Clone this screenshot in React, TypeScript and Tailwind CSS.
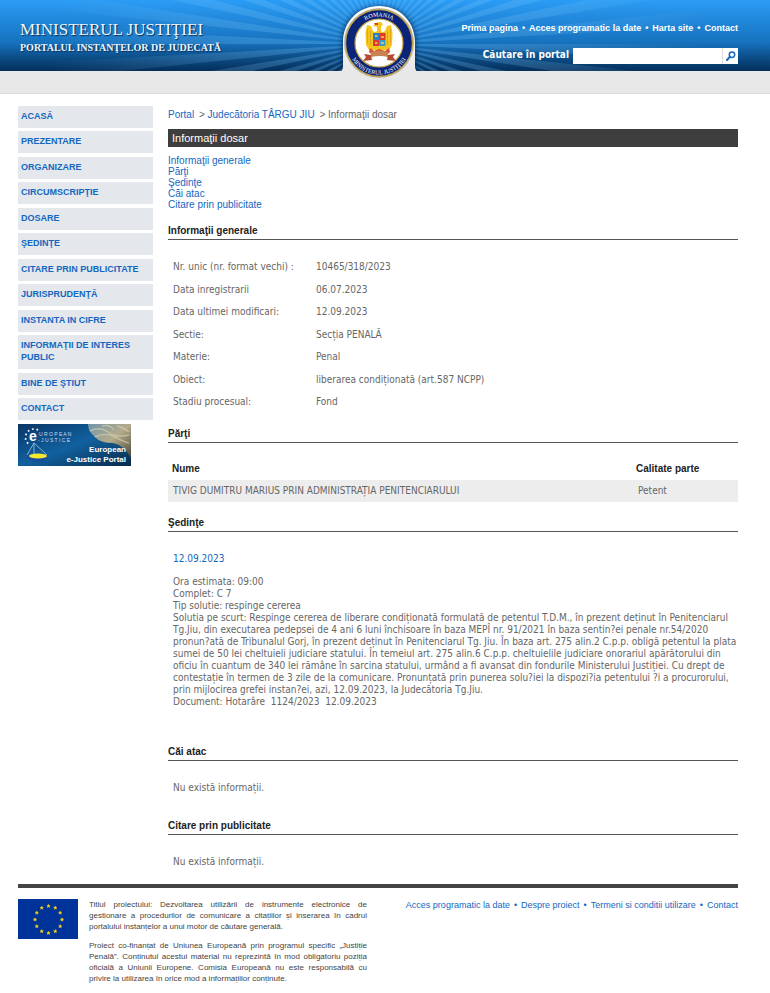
import React from 'react';

const menu = [
  'ACASĂ', 'PREZENTARE', 'ORGANIZARE', 'CIRCUMSCRIPŢIE', 'DOSARE', 'ŞEDINŢE',
  'CITARE PRIN PUBLICITATE', 'JURISPRUDENŢĂ', 'INSTANTA IN CIFRE',
  'INFORMAŢII DE INTERES PUBLIC', 'BINE DE ŞTIUT', 'CONTACT',
];

const details = [
  ['Nr. unic (nr. format vechi) :', '10465/318/2023'],
  ['Data inregistrarii', '06.07.2023'],
  ['Data ultimei modificari:', '12.09.2023'],
  ['Sectie:', 'Secția PENALĂ'],
  ['Materie:', 'Penal'],
  ['Obiect:', 'liberarea condiționată (art.587 NCPP)'],
  ['Stadiu procesual:', 'Fond'],
];

const anchors = [
  ['generale', 'Informaţii generale'],
  ['parti', 'Părţi'],
  ['sedinte', 'Şedinţe'],
  ['cai', 'Căi atac'],
  ['citare', 'Citare prin publicitate'],
];

function LinkRow({ items, className }: { items: string[]; className: string }) {
  return (
    <ul className={'flex justify-end whitespace-nowrap ' + className}>
      {items.map((t, i) => (
        <li key={t}>
          {i > 0 && <span className="mx-1">•</span>}
          <a href="#">{t}</a>
        </li>
      ))}
    </ul>
  );
}

function Emblem() {
  return (
    <svg viewBox="0 0 98 96" className="h-24 w-[98px]" role="img" aria-label="Ministerul Justiției">
      <defs>
        <filter id="glow" x="-20%" y="-20%" width="140%" height="140%">
          <feGaussianBlur stdDeviation="2.500" />
        </filter>
        <linearGradient id="tab" x1="0" x2="0" y1="0" y2="1">
          <stop offset="0" stopColor="#fff" />
          <stop offset=".9" stopColor="#e8e8e8" />
        </linearGradient>
        <clipPath id="band"><rect width="98" height="71" /></clipPath>
        <path id="arcTop" d="M22.500 43 A26.500 26.500 0 0 1 75.500 43" />
        <path id="arcBottom" d="M17.500 43 A31.500 31.500 0 0 0 80.500 43" />
      </defs>
      <g clipPath="url(#band)">
        <path d="M12 72 V42 C12 20 28 6 49 6 C70 6 86 20 86 42 V72Z" fill="#04234a" opacity=".75" filter="url(#glow)" />
      </g>
      <path d="M10 72 C12 71 13 69 13 66 V42 C13 21 29 6 49 6 C69 6 85 21 85 42 V66 C85 69 86 71 88 72 V80 H10Z" fill="url(#tab)" />
      <circle cx="49" cy="43" r="35" fill="#b9b9b9" />
      <circle cx="49" cy="43" r="33.500" fill="#0b2478" stroke="#c4a748" strokeWidth="1.300" />
      <circle cx="49" cy="43" r="24" fill="#fff" stroke="#c4a748" strokeWidth="1.200" />
      <text fontFamily="Liberation Serif, serif" fontSize="6" fill="#fff" textAnchor="middle">
        <textPath href="#arcTop" startOffset="50%">ROMANIA</textPath>
      </text>
      <text fontFamily="Liberation Serif, serif" fontSize="6" fill="#fff" textAnchor="middle">
        <textPath href="#arcBottom" startOffset="50%">MINISTERUL JUSTIŢIEI</textPath>
      </text>
      <path d="M46 23 q3-2 6 0 l1 2 -2 1 v5 q2 2 4 0 l2-5 4-1 1.500 8 -.5 12 -3 5 h-6 l-4 5 -4-5 h-6 l-3-5 -.5-12 1.500-8 4 1 2 5 q2 2 4 0 v-4 l-4-1 2-2Z" fill="#f4c41f" />
      <path d="M37.500 29v14M40.500 31v14M57.500 31v14M60.500 29v14" stroke="#d8a21a" strokeWidth=".8" />
      <path d="M44 23h4v2h-3Z" fill="#d8452c" />
      <rect x="43" y="33" width="6" height="7" fill="#2c7fc2" />
      <rect x="49" y="33" width="6.500" height="7" fill="#dc3a2c" />
      <rect x="43" y="40" width="6" height="6" fill="#dc3a2c" />
      <rect x="49" y="40" width="6.500" height="6" fill="#35a0cf" />
      <path d="M45 36h2.500M51 37h3M45 43h2.500M51 43h3" stroke="#f4d24a" strokeWidth="1.500" />
      <path d="M40 48l4 3 5-2 6 2 4-3 1 4-4 4H43l-4-4Z" fill="#d8502f" />
      <path d="M41 52q8-3 17 0v5q-8-2-17 0Z" fill="#c88352" />
      <path d="M41 55l-7-1 2 3-3 4 9-1ZM58 55l7-1-2 3 3 4-9-1Z" fill="#b44a30" />
    </svg>
  );
}

const rays = Array.from({ length: 60 }, (_, i) => {
  const a = (i * Math.PI) / 30;
  const x1 = 379 + 420 * Math.cos(a);
  const y1 = 44 + 420 * Math.sin(a);
  const x2 = 379 + 420 * Math.cos(a + 0.05);
  const y2 = 44 + 420 * Math.sin(a + 0.05);
  return `M379 44L${x1.toFixed(1)} ${y1.toFixed(1)} ${x2.toFixed(1)} ${y2.toFixed(1)}Z`;
}).join('');

function Rays() {
  return (
    <svg className="absolute inset-0 h-full w-full" viewBox="0 0 770 71" preserveAspectRatio="xMidYMid slice" aria-hidden="true">
      <defs>
        <radialGradient id="ray" gradientUnits="userSpaceOnUse" cx="379" cy="44" r="330">
          <stop offset="0" stopColor="#6cc4ff" stopOpacity=".3" />
          <stop offset=".5" stopColor="#8fd0ff" stopOpacity=".18" />
          <stop offset="1" stopColor="#8fd0ff" stopOpacity="0" />
        </radialGradient>
      </defs>
      <path d={rays} fill="url(#ray)" />
    </svg>
  );
}

function JusticeBanner() {
  return (
    <svg viewBox="0 0 113 42" className="h-[42px] w-[113px]" role="img" aria-label="European e-Justice Portal">
      <defs>
        <linearGradient id="ban" x1="0" x2="1" y1="0" y2="1">
          <stop offset="0" stopColor="#0a3566" />
          <stop offset=".5" stopColor="#11619f" />
          <stop offset="1" stopColor="#082a4b" />
        </linearGradient>
        <linearGradient id="stone" x1="0" x2="1" y1="0" y2="1">
          <stop offset="0" stopColor="#6e97ad" />
          <stop offset=".5" stopColor="#b5aa8a" />
          <stop offset="1" stopColor="#45483c" />
        </linearGradient>
      </defs>
      <rect width="113" height="42" fill="url(#ban)" />
      <path d="M70 0h43v34q-7-13-18-15-13 0-18-6-7-5-7-13Z" fill="url(#stone)" />
      <path d="M72 7q10-5 18 1t21 3M77 13q11-5 20 0t14 6M84 2q8-2 12 4M99 2q6 1 12 6" fill="none" stroke="#dbd3b4" strokeWidth="1.500" opacity=".6" />
      <path d="M20 6A8.500 8.500 0 1 0 12 21" fill="none" stroke="#fff" strokeWidth="1.700" strokeDasharray="1.700 2.800" />
      <text x="11" y="17" fontFamily="Liberation Sans, sans-serif" fontSize="14" fontWeight="700" fill="#fff">e</text>
      <g fontFamily="Liberation Sans, sans-serif" fontSize="5" fill="#c8def0">
        <text x="21" y="12">U R O P E A N</text>
        <text x="20" y="18">- J U S T I C E</text>
      </g>
      <path d="M16 19 L9 31M16 19v12M16 19l13 12" fill="none" stroke="#9cc8e6" strokeWidth=".8" />
      <path d="M8 31h22q-2 7-11 7t-11-7Z" fill="#174b9c" />
      <ellipse cx="20" cy="32" rx="9" ry="2.500" fill="#f8e92e" />
      <g fontFamily="Liberation Sans, sans-serif" fontSize="8" fontWeight="700" fill="#fff" textAnchor="end">
        <text x="108" y="28">European</text>
        <text x="108" y="38">e-Justice Portal</text>
      </g>
    </svg>
  );
}

function EuFlag() {
  const stars = Array.from({ length: 12 }, (_, i) => {
    const a = (i * Math.PI) / 6;
    return [30.5 + 13.5 * Math.sin(a), 20.5 - 13.5 * Math.cos(a)];
  });
  return (
    <svg viewBox="0 0 60 40" className="h-10 w-[60px] shrink-0" role="img" aria-label="Uniunea Europeană">
      <rect width="60" height="40" fill="#039" />
      {stars.map(([x, y]) => (
        <path key={`${x}-${y}`} transform={`translate(${x} ${y})`} d="M0-1.700 .5-.5 1.700-.5 .8.3 1.100 1.500 0 .8-1.100 1.500-.8.3-1.700-.5-.5-.5Z" fill="#fd1" stroke="#fd1" strokeWidth=".4" />
      ))}
    </svg>
  );
}

function Heading({ id, children }: { id: string; children: React.ReactNode }) {
  return (
    <h2 id={id} className="border-b border-[#555] pb-[2px] text-[10px] leading-[12px] font-bold text-[#222]">
      {children}
    </h2>
  );
}

export default function App() {
  return (
    <div className="bg-white font-['Liberation_Sans',sans-serif] text-[10px] text-[#666]">
      <header className="relative border-b border-[#d8d8d8] bg-[#e8e8e8] pb-[22px]">
        <div className="relative h-[71px] bg-linear-to-b from-[#2b9cf5] via-[#1672be] via-60% to-[#052f5a]">
          <Rays />
          <div className="relative mr-8 ml-5 flex justify-between">
            <div className="pt-5 font-['Liberation_Serif',serif] whitespace-nowrap text-[#eef5fc] [text-shadow:1px_1px_1px_#07305a]">
              <h1 className="text-[17px] leading-[19px]">MINISTERUL JUSTIŢIEI</h1>
              <p className="pt-[2px] text-[10px] leading-[14px] font-bold">PORTALUL INSTANŢELOR DE JUDECATĂ</p>
            </div>
            <div className="pt-[22px] text-white">
              <LinkRow items={['Prima pagina', 'Acces programatic la date', 'Harta site', 'Contact']} className="text-[9px] leading-[12px] font-bold" />
              <form className="mt-[14px] flex items-center justify-end" onSubmit={(e) => e.preventDefault()}>
                <label htmlFor="q" className="mr-1 pb-[2px] font-['DejaVu_Sans_Condensed','DejaVu_Sans',sans-serif] text-[10px] leading-[12px] font-bold">Căutare în portal</label>
                <input id="q" type="text" className="h-4 w-[149px] bg-white px-1 text-[10px] text-black outline-none" />
                <button type="submit" aria-label="Caută" className="flex h-4 w-4 items-center justify-center border-l border-[#ddd] bg-white">
                  <svg viewBox="0 0 10 10" className="h-[10px] w-[10px]" fill="none" stroke="#1467b8">
                    <circle cx="6" cy="3.700" r="2.700" strokeWidth="1.500" />
                    <path d="M4 5.700 1 9" strokeWidth="2" strokeLinecap="round" />
                  </svg>
                </button>
              </form>
            </div>
          </div>
        </div>
        <div className="pointer-events-none absolute top-0 right-8 left-5 flex justify-center">
          <Emblem />
        </div>
      </header>

      <div className="mr-8 ml-[18px] flex gap-[15px] pt-3">
        <nav className="w-[135px] shrink-0">
          <ul>
            {menu.map((m) => (
              <li key={m} className="odd:mb-[3px] even:mb-1">
                <a href="#" className="block bg-[#e4e8ec] pt-1 pr-3 pb-[6px] pl-[3px] text-[9px] leading-[12px] font-bold text-[#1467c0]">{m}</a>
              </li>
            ))}
          </ul>
          <a href="#" className="block"><JusticeBanner /></a>
        </nav>

        <main className="min-w-0 grow">
          <p className="pt-[3px] text-[10px] leading-[12px]">
            <a href="#" className="text-[#1467c0]">Portal</a>
            <span className="ml-[2px]"> &gt; </span>
            <a href="#" className="text-[#1467c0]">Judecătoria TÂRGU JIU</a>
            <span className="ml-[2px]"> &gt; </span>Informaţii dosar
          </p>
          <h1 className="mt-2 bg-[#3e3e3e] pl-1 text-[11px] leading-[18px] text-white">Informaţii dosar</h1>
          <ul className="mt-2 text-[10px] leading-[11px] text-[#1467c0]">
            {anchors.map(([id, t]) => (
              <li key={id}><a href={'#' + id}>{t}</a></li>
            ))}
          </ul>

          <section className="pt-[15px]">
            <Heading id="generale">Informaţii generale</Heading>
            <table className="mt-4 font-['DejaVu_Sans_Condensed','DejaVu_Sans',sans-serif] text-[10px] leading-[12px]">
              <tbody>
                {details.map(([k, v]) => (
                  <tr key={k} className="odd:h-[22px] even:h-[23px]">
                    <th scope="row" className="w-[148px] pl-[5px] text-left font-normal">{k}</th>
                    <td>{v}</td>
                  </tr>
                ))}
              </tbody>
            </table>
          </section>

          <section className="pt-[15px]">
            <Heading id="parti">Părţi</Heading>
            <table className="mt-[15px] w-full text-left text-[10px] leading-[12px]">
              <thead>
                <tr className="h-[22px] text-[#222]">
                  <th className="pl-1">Nume</th>
                  <th className="w-[102px]">Calitate parte</th>
                </tr>
              </thead>
              <tbody className="font-['DejaVu_Sans_Condensed','DejaVu_Sans',sans-serif]">
                <tr className="h-[22px] bg-[#ededed]">
                  <td className="pl-[5px]">TIVIG DUMITRU MARIUS PRIN ADMINISTRAȚIA PENITENCIARULUI</td>
                  <td className="pl-[2px]">Petent</td>
                </tr>
              </tbody>
            </table>
          </section>

          <section className="pt-[15px]">
            <Heading id="sedinte">Şedinţe</Heading>
            <div className="mt-[21px] pl-[5px] font-['DejaVu_Sans_Condensed','DejaVu_Sans',sans-serif] text-[10px] leading-[12px]">
              <p><a href="#" className="text-[#1467c0]">12.09.2023</a></p>
              <p className="mt-[11px] whitespace-nowrap">
                Ora estimata: 09:00<br />
                Complet: C 7<br />
                Tip solutie: respinge cererea<br />
                Solutia pe scurt: Respinge cererea de liberare condiționată formulată de petentul T.D.M., în prezent deținut în Penitenciarul<br />
                Tg.Jiu, din executarea pedepsei de 4 ani 6 luni închisoare în baza MEPÎ nr. 91/2021 în baza sentin?ei penale nr.54/2020<br />
                pronun?ată de Tribunalul Gorj, în prezent deținut în Penitenciarul Tg. Jiu. În baza art. 275 alin.2 C.p.p. obligă petentul la plata<br />
                sumei de 50 lei cheltuieli judiciare statului. În temeiul art. 275 alin.6 C.p.p. cheltuielile judiciare onorariul apărătorului din<br />
                oficiu în cuantum de 340 lei rămâne în sarcina statului, urmând a fi avansat din fondurile Ministerului Justiției. Cu drept de<br />
                contestație în termen de 3 zile de la comunicare. Pronunțată prin punerea solu?iei la dispozi?ia petentului ?i a procurorului,<br />
                prin mijlocirea grefei instan?ei, azi, 12.09.2023, la Judecătoria Tg.Jiu.<br />
                Document: Hotarâre&nbsp; 1124/2023&nbsp; 12.09.2023
              </p>
            </div>
          </section>

          <section className="pt-[38px]">
            <Heading id="cai">Căi atac</Heading>
            <p className="mt-[21px] pl-[5px] font-['DejaVu_Sans_Condensed','DejaVu_Sans',sans-serif] text-[10px] leading-[12px]">Nu există informații.</p>
          </section>
          <section className="pt-[26px]">
            <Heading id="citare">Citare prin publicitate</Heading>
            <p className="mt-[21px] pl-[5px] font-['DejaVu_Sans_Condensed','DejaVu_Sans',sans-serif] text-[10px] leading-[12px]">Nu există informații.</p>
          </section>
        </main>
      </div>

      <footer className="mt-4 mr-8 ml-[18px] flex items-start border-t-4 border-[#444] pt-[11px]">
        <EuFlag />
        <div className="ml-[11px] w-[278px] text-justify text-[8px] leading-[11px] text-[#444]">
          <p>Titlul proiectului: Dezvoltarea utilizării de instrumente electronice de gestionare a procedurilor de comunicare a citațiilor și inserarea în cadrul portalului instanțelor a unui motor de căutare generală.</p>
          <p className="mt-2">Proiect co-finanțat de Uniunea Europeană prin programul specific „Justiție Penală”. Conținutul acestui material nu reprezintă în mod obligatoriu poziția oficială a Uniunii Europene. Comisia Europeană nu este responsabilă cu privire la utilizarea în orice mod a informațiilor conținute.</p>
        </div>
        <LinkRow items={['Acces programatic la date', 'Despre proiect', 'Termeni si conditii utilizare', 'Contact']} className="grow text-[9px] leading-[12px] text-[#1467c0]" />
      </footer>
    </div>
  );
}
